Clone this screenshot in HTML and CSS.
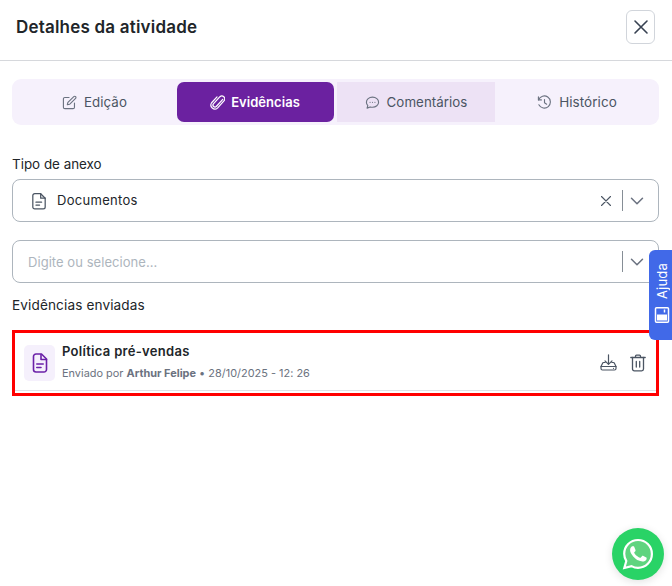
FILE: index.html
```html
<!DOCTYPE html>
<html lang="pt-BR">
<head>
<meta charset="utf-8">
<title>Detalhes da atividade</title>
<link rel="stylesheet" href="styles.css">
</head>
<body>
<header class="header">
  <h1 class="title">Detalhes da atividade</h1>
  <button class="close" aria-label="Fechar"><svg width="16" height="16" viewBox="0 0 16 16" fill="none" stroke="#374151" stroke-width="1.6" stroke-linecap="round"><path d="M2 2l12 12M14 2L2 14"/></svg></button>
</header>
<main class="content">
  <nav class="tabs">
    <div class="tab tab-edit"><svg class="ico" viewBox="0 0 16 16" fill="none" stroke="#6b7280" stroke-width="1.2" stroke-linecap="round" stroke-linejoin="round"><path d="M7.5 2.700H3a1.500 1.500 0 0 0-1.500 1.500V13A1.500 1.500 0 0 0 3 14.500h8.800a1.500 1.500 0 0 0 1.500-1.500V8.500"/><path d="M12.600 1.700a1.300 1.300 0 0 1 1.900 1.900L8.300 9.800l-2.600.6.600-2.600z"/></svg><span>Edição</span></div>
    <div class="tab tab-active"><svg class="ico" viewBox="0 0 16 16" fill="none" stroke="#fff" stroke-width="1.300" stroke-linecap="round" stroke-linejoin="round"><path d="M13.600 4.600 6.700 12.300a2.100 2.100 0 0 1-3.100-2.800l7-7.700a3.100 3.100 0 0 1 4.500 4.200l-7.100 8a4.300 4.300 0 0 1-6.300-5.700L7.500 2"/></svg><span>Evidências</span></div>
    <div class="tab tab-hover"><svg class="ico" viewBox="0 0 16 16" fill="none" stroke="#6b7280" stroke-width="1.200" stroke-linecap="round" stroke-linejoin="round"><path d="M8 2.300c3.700 0 6.500 2.400 6.500 5.400S11.700 13.100 8 13.100c-.9 0-1.700-.1-2.500-.4L2.200 14l.8-2.700C2 10.300 1.500 9.100 1.500 7.700c0-3 2.800-5.400 6.500-5.400z"/><path d="M5.400 7.800h.01M8 7.800h.01M10.600 7.800h.01"/></svg><span>Comentários</span></div>
    <div class="tab tab-history"><svg class="ico" viewBox="0 0 16 16" fill="none" stroke="#6b7280" stroke-width="1.200" stroke-linecap="round" stroke-linejoin="round"><path d="M1.500 2v3.200h3.200"/><path d="M1.700 5.200A6.500 6.500 0 1 1 2 10.500"/><path d="M8 4.800V8.300l2.300 1.500"/></svg><span>Histórico</span></div>
  </nav>

  <label class="label label-type">Tipo de anexo</label>
  <div class="select select-type">
    <svg class="doc-ico" viewBox="0 0 16 16" fill="none" stroke="#4b5563" stroke-width="1.100" stroke-linecap="round" stroke-linejoin="round"><path d="M2.500 3.200A1.700 1.700 0 0 1 4.200 1.500h5.300l4 4v7.800a1.700 1.700 0 0 1-1.700 1.700H4.200a1.700 1.700 0 0 1-1.700-1.700z"/><path d="M9.500 1.500v4h4M5.300 9h5M5.300 11.600h3.200"/></svg>
    <span class="select-value">Documentos</span>
    <svg class="clear" viewBox="0 0 10 10" fill="none" stroke="#4b5563" stroke-width="1.100" stroke-linecap="round"><path d="M.5.500l9 9M9.500.500l-9 9"/></svg>
    <span class="divider"></span>
    <svg class="chev" viewBox="0 0 14 8" fill="none" stroke="#6b7280" stroke-width="1.500" stroke-linecap="round" stroke-linejoin="round"><path d="M1.500 1.200 7 6.800l5.500-5.600"/></svg>
  </div>

  <div class="select select-search">
    <span class="placeholder">Digite ou selecione...</span>
    <span class="divider"></span>
    <svg class="chev" viewBox="0 0 14 8" fill="none" stroke="#6b7280" stroke-width="1.500" stroke-linecap="round" stroke-linejoin="round"><path d="M1.500 1.200 7 6.800l5.500-5.600"/></svg>
  </div>

  <h2 class="label label-sent">Evidências enviadas</h2>

  <section class="highlight">
    <article class="file">
      <div class="file-badge"><svg width="18" height="20" viewBox="0 0 18 20" fill="none" stroke="#6b21a8" stroke-width="1.600" stroke-linecap="round" stroke-linejoin="round"><path d="M2.500 3.500a2.500 2.500 0 0 1 2.500-2.500h5.500l5 5v10.500a2.500 2.500 0 0 1-2.500 2.500H5a2.500 2.500 0 0 1-2.500-2.500z"/><path d="M10 1.500V6.500h5.500M5.800 11h6.400M5.800 14.500h4.200"/></svg></div>
      <div class="file-info">
        <div class="file-name">Política pré-vendas</div>
        <div class="file-meta">Enviado por <b>Arthur Felipe</b> • 28/10/2025 - 12: 26</div>
      </div>
      <div class="file-actions">
        <svg width="17" height="17" viewBox="0 0 17 17" fill="none" stroke="#4b5563" stroke-width="1.200" stroke-linecap="round" stroke-linejoin="round"><path d="M8.500 .8v9.400M5 6.800l3.500 3.500L12 6.800"/><path d="M5.200 8.500H3.600a1 1 0 0 0-1 .8L1 12.500v2a1.500 1.500 0 0 0 1.500 1.500h12a1.500 1.500 0 0 0 1.500-1.500v-2l-1.600-3.200a1 1 0 0 0-1-.8h-1.600"/><path d="M1 12.500h15M13.500 14.300h.01"/></svg>
        <svg width="16" height="18" viewBox="0 0 16 18" fill="none" stroke="#4b5563" stroke-width="1.300" stroke-linecap="round" stroke-linejoin="round"><path d="M.8 3.500h14.400M5.500 3.500V2.200A1 1 0 0 1 6.500 1.200h3a1 1 0 0 1 1 1v1.300"/><path d="M2.500 3.500v11.500a1.800 1.800 0 0 0 1.800 1.800h7.400a1.800 1.800 0 0 0 1.800-1.800V3.500"/><path d="M6.300 7.500v5.500M9.700 7.500v5.500"/></svg>
      </div>
    </article>
  </section>
</main>

<aside class="help">
  <span class="help-text">Ajuda</span>
  <svg class="help-ico" width="16" height="16" viewBox="0 0 16 16" fill="none" stroke="#fff" stroke-width="1.500"><rect x=".8" y="1.500" width="14.400" height="13" rx="1"/><rect x="2.500" y="3" width="6" height="10" fill="#fff" stroke="none"/><path d="M10.500 10.500h3"/></svg>
</aside>

<a class="whatsapp" aria-label="WhatsApp"><svg width="34" height="34" viewBox="0 0 34 34" fill="none"><path d="M17 3C9.300 3 3.200 9.200 3.200 16.800c0 2.600.8 5.100 2.100 7.200L3.300 31l7.200-1.900c2 1.100 4.200 1.700 6.500 1.700 7.700 0 13.900-6.200 13.900-13.900S24.700 3 17 3z" stroke="#fff" stroke-width="2.200" fill="#5fd47f"/><path d="M13.300 10c-.3-.7-.6-.7-.9-.7h-.8c-.3 0-.7.100-1.100.500-.4.400-1.400 1.400-1.400 3.400s1.500 3.900 1.700 4.200c.2.300 2.800 4.500 7 6.100 3.400 1.300 4.100 1.100 4.900 1 .8-.1 2.400-1 2.700-1.900.3-.9.300-1.700.2-1.900-.1-.2-.4-.3-.8-.5l-2.800-1.400c-.4-.1-.7-.2-.9.200-.3.400-1.100 1.400-1.300 1.600-.2.300-.5.300-.9.100-.4-.2-1.700-.6-3.300-2-1.200-1.100-2-2.400-2.300-2.800-.2-.4 0-.6.200-.8l.6-.7c.2-.2.300-.4.400-.7.100-.3.100-.5 0-.7z" fill="#fff"/></svg></a>
</body>
</html>
```
FILE: styles.css
```css
* { box-sizing: border-box; }
html, body { margin: 0; padding: 0; }
body {
  width: 672px;
  height: 586px;
  overflow: hidden;
  position: relative;
  background: #fff;
  font-family: "Inter", "Liberation Sans", sans-serif;
  color: #1f2937;
}
.header {
  height: 61px;
  border-bottom: 1px solid #d6d8dc;
  display: flex;
  align-items: center;
  justify-content: space-between;
  padding: 0 17px 0 16px;
}
.title { margin: -6px 0 0; font-size: 17px; font-weight: 600; color: #212529; letter-spacing: .2px; }
.close {
  width: 29px;
  height: 34px;
  margin-top: -7px;
  padding: 0;
  background: #fff;
  border: 1px solid #d1d5db;
  border-radius: 6px;
  display: flex;
  align-items: center;
  justify-content: center;
}
.content { padding: 18px 13px 0 12px; }
.tabs {
  height: 46px;
  padding: 3px 3px;
  background: #f6f1fc;
  border-radius: 9px;
  display: grid;
  grid-template-columns: 162px 157px 161px 1fr;
  gap: 0;
}
.tab {
  display: flex;
  align-items: center;
  justify-content: center;
  gap: 7px;
  padding-bottom: 1px;
  font-size: 13.300px;
  color: #4b5563;
  letter-spacing: .05px;
}
.ico { width: 15px; height: 15px; flex: none; margin-top: 1px; }
.tab-edit { padding-right: 3px; }
.tab-active {
  background: #6b21a0;
  color: #fff;
  font-weight: 600;
  border-radius: 7px;
  height: 40px;
  gap: 6px;
  font-size: 13px;
  padding-right: 1px;
}
.tab-hover { background: #ede2f5; margin-left: 3px; width: 158px; }
.tab-history { padding-left: 3px; font-size: 13.500px; }
.label {
  display: block;
  margin: 0;
  font-size: 13.400px;
  font-weight: 400;
  color: #212529;
  line-height: 16px;
}
.label-type { margin-top: 31px; }
.select {
  height: 43px;
  border: 1px solid #adb5bd;
  border-radius: 8px;
  display: flex;
  align-items: center;
  background: #fff;
}
.select-type { margin-top: 7px; padding: 0 14px 0 17px; }
.select-search { margin-top: 18px; padding: 0 14px 0 15px; }
.doc-ico { width: 18px; height: 18px; flex: none; margin-right: 9px; }
.select-value { flex: 1; font-size: 13px; color: #212529; letter-spacing: .3px; margin-top: -2px; }
.placeholder { flex: 1; font-size: 13px; color: #adb5bd; letter-spacing: .05px; }
.clear { width: 10px; height: 10px; margin-right: 11px; }
.divider { width: 1px; height: 21px; background: #868e96; margin-right: 7px; }
.chev { width: 14px; height: 8px; }
.label-sent { margin-top: 14px; letter-spacing: .12px; font-size: 13.600px; }
.highlight {
  margin-top: 17px;
  height: 66px;
  border: 3px solid #f00;
  padding: 0 10px 3px 9px;
}
.file {
  height: 58px;
  border-bottom: 1px solid #dee2e6;
  display: flex;
  align-items: center;
  gap: 7px;
  padding-top: 2px;
  margin: 0 -10px 0 -9px;
  padding-left: 9px;
  padding-right: 10px;
}
.file-badge {
  width: 31px;
  height: 36px;
  background: #f5f0fc;
  border-radius: 5px;
  display: flex;
  align-items: center;
  justify-content: center;
  flex: none;
}
.file-info { flex: 1; margin-top: -3px; }
.file-name { font-size: 13px; font-weight: 600; color: #212529; line-height: 16px; letter-spacing: .3px; }
.file-meta { margin-top: 7px; font-size: 10.900px; line-height: 14px; color: #6b7280; letter-spacing: .02px; }
.file-meta b { font-weight: 700; color: #6b7280; }
.file-actions { display: flex; align-items: center; gap: 13px; }
.help {
  position: absolute;
  left: 649px;
  top: 250px;
  width: 23px;
  height: 90px;
  background: #4169e8;
  border-radius: 6px 0 0 6px;
  display: flex;
  flex-direction: column;
  align-items: center;
  justify-content: flex-end;
  gap: 8px;
  padding-bottom: 26px;
  padding-left: 2px;
  color: #fff;
}
.help-text { writing-mode: vertical-rl; transform: rotate(180deg); font-size: 13px; line-height: 16px; letter-spacing: .2px; }
.help-ico { transform: rotate(-90deg); margin-bottom: -9px; }
.whatsapp {
  position: absolute;
  left: 612px;
  top: 528px;
  width: 52px;
  height: 52px;
  border-radius: 50%;
  background: #29d366;
  display: flex;
  align-items: center;
  justify-content: center;
  box-shadow: 0 2px 8px rgba(0,0,0,.12);
}
```
